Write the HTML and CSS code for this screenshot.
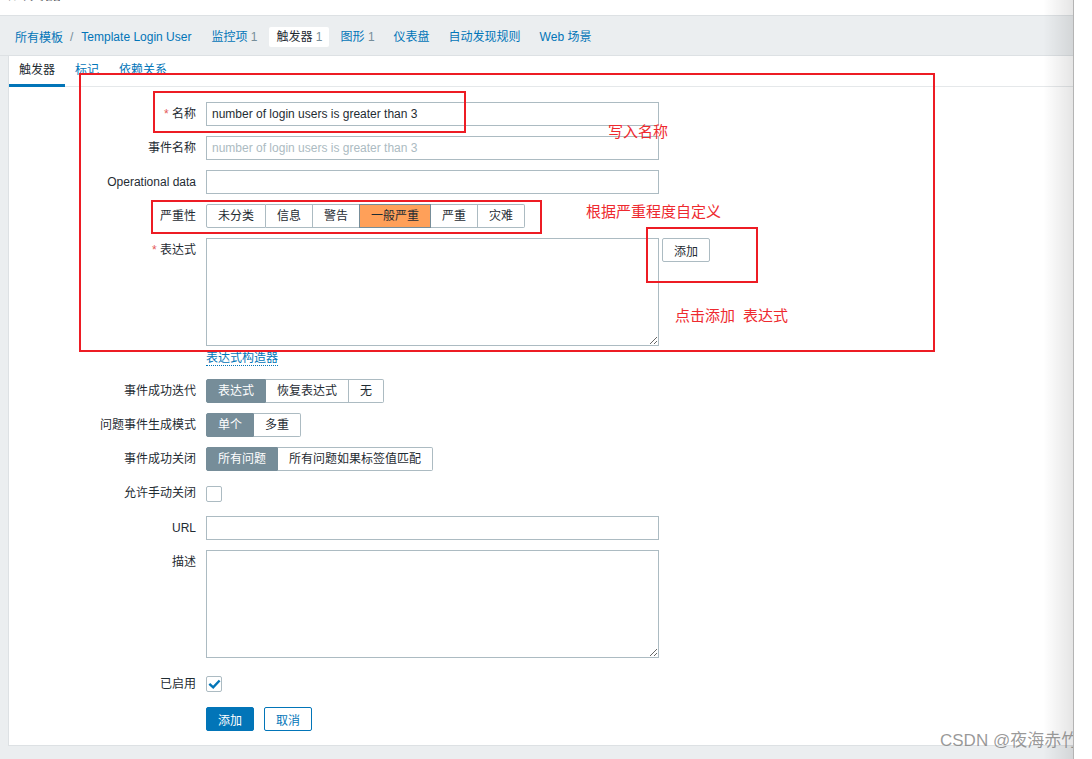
FILE: index.html
```html
<!DOCTYPE html>
<html lang="zh">
<head>
<meta charset="utf-8">
<title>触发器</title>
<link rel="stylesheet" href="styles.css">
</head>
<body>
<div class="app">
  <header class="titlebar"><h1 class="title">触发器</h1></header>
  <nav class="navbar">
    <a class="crumb">所有模板</a><span class="sep">/</span><a class="crumb">Template Login User</a>
    <ul class="navlist">
      <li class="navitem"><a>监控项</a> <span class="count">1</span></li>
      <li class="navitem active"><span>触发器</span> <span class="count">1</span></li>
      <li class="navitem"><a>图形</a> <span class="count">1</span></li>
      <li class="navitem"><a>仪表盘</a></li>
      <li class="navitem"><a>自动发现规则</a></li>
      <li class="navitem"><a>Web 场景</a></li>
    </ul>
  </nav>
  <main class="content">
    <ul class="tabs">
      <li class="tab active">触发器</li>
      <li class="tab">标记</li>
      <li class="tab">依赖关系</li>
    </ul>
    <form class="form">
      <div class="row">
        <label class="label"><span class="req">*</span> 名称</label>
        <div class="field"><input class="input" type="text" value="number of login users is greater than 3"></div>
      </div>
      <div class="row">
        <label class="label">事件名称</label>
        <div class="field"><input class="input" type="text" placeholder="number of login users is greater than 3"></div>
      </div>
      <div class="row">
        <label class="label">Operational data</label>
        <div class="field"><input class="input" type="text"></div>
      </div>
      <div class="row">
        <label class="label">严重性</label>
        <div class="field">
          <div class="seg">
            <span class="segbtn">未分类</span><span class="segbtn">信息</span><span class="segbtn">警告</span><span class="segbtn avg">一般严重</span><span class="segbtn">严重</span><span class="segbtn">灾难</span>
          </div>
        </div>
      </div>
      <div class="row row-expr">
        <label class="label"><span class="req">*</span> 表达式</label>
        <div class="field">
          <div class="expr-line">
            <textarea class="textarea"></textarea>
            <button type="button" class="btn-alt">添加</button>
          </div>
          <div class="builder"><a class="dotlink">表达式构造器</a></div>
        </div>
      </div>
      <div class="row">
        <label class="label">事件成功迭代</label>
        <div class="field">
          <div class="seg">
            <span class="segbtn on">表达式</span><span class="segbtn">恢复表达式</span><span class="segbtn">无</span>
          </div>
        </div>
      </div>
      <div class="row">
        <label class="label">问题事件生成模式</label>
        <div class="field">
          <div class="seg">
            <span class="segbtn on">单个</span><span class="segbtn">多重</span>
          </div>
        </div>
      </div>
      <div class="row">
        <label class="label">事件成功关闭</label>
        <div class="field">
          <div class="seg">
            <span class="segbtn on">所有问题</span><span class="segbtn">所有问题如果标签值匹配</span>
          </div>
        </div>
      </div>
      <div class="row row-check">
        <label class="label">允许手动关闭</label>
        <div class="field field-check"><span class="checkbox"></span></div>
      </div>
      <div class="row">
        <label class="label">URL</label>
        <div class="field"><input class="input" type="text"></div>
      </div>
      <div class="row">
        <label class="label">描述</label>
        <div class="field"><textarea class="textarea"></textarea></div>
      </div>
      <div class="row row-enabled">
        <label class="label">已启用</label>
        <div class="field field-check">
          <span class="checkbox checked"><svg width="13" height="13" viewBox="0 0 13 13"><path d="M2.2 6.6 L5.2 9.4 L10.8 3.4" fill="none" stroke="#0275b8" stroke-width="2.4" stroke-linecap="square"/></svg></span>
        </div>
      </div>
      <div class="row row-buttons">
        <span></span>
        <div class="field buttons">
          <button type="button" class="btn-main">添加</button>
          <button type="button" class="btn-cancel">取消</button>
        </div>
      </div>
    </form>
  </main>
  <div class="edge-shadow"></div>
  <div class="annot box-big"></div>
  <div class="annot box-name"></div>
  <div class="annot box-sev"></div>
  <div class="annot box-add"></div>
  <div class="note note-name">写入名称</div>
  <div class="note note-sev">根据严重程度自定义</div>
  <div class="note note-add">点击添加<span class="gap"></span>表达式</div>
  <div class="watermark">CSDN @夜海赤竹</div>
</div>
</body>
</html>
```
FILE: styles.css
```css
* { box-sizing: border-box; }
html, body { margin: 0; padding: 0; background: #ffffff; }
body {
  width: 1092px;
  height: 759px;
  overflow: hidden;
  font-family: "Liberation Sans", Arial, "Noto Sans CJK SC", sans-serif;
  font-size: 12px;
  color: #1f2c33;
}
.app {
  position: relative;
  width: 1074px;
  height: 759px;
  background: #ebeef0;
  border-right: 1px solid #b4b4b4;
  display: flex;
  flex-direction: column;
  overflow: hidden;
}
.titlebar {
  height: 16px;
  flex: none;
  background: #ffffff;
  border-bottom: 1px solid #dde1e4;
  overflow: hidden;
}
.title {
  margin: -19px 0 0 8px;
  font-size: 18px;
  line-height: 24px;
  font-weight: normal;
  color: #1f2c33;
}
.navbar {
  flex: none;
  height: 40px;
  display: flex;
  align-items: center;
  padding-left: 15px;
  padding-top: 2px;
  border-bottom: 1px solid #dde1e4;
  background: #ebeef0;
}
.crumb { color: #0275b8; text-decoration: none; }
.sep { color: #768d99; margin: 0 8px 0 7px; }
.navlist {
  display: flex;
  list-style: none;
  margin: 0 0 0 13px;
  padding: 0;
  gap: 5px;
}
.navitem {
  height: 20px;
  line-height: 20px;
  padding: 0 7px;
  border-radius: 2px;
  color: #0275b8;
  white-space: nowrap;
}
.navitem a { color: #0275b8; }
.navitem .count { color: #768d99; }
.navitem.active { background: #ffffff; color: #1f2c33; padding: 0 6px 0 7px; }
.navitem.active .count { color: #768d99; }
.content {
  flex: none;
  height: 690px;
  margin-left: 8px;
  background: #ffffff;
  border-left: 1px solid #dde1e4;
  border-bottom: 1px solid #dde1e4;
}
.tabs {
  display: flex;
  list-style: none;
  margin: 0;
  padding: 0;
  height: 31px;
  box-shadow: inset 0 -1px 0 #e5e8ea;
}
.tab {
  height: 31px;
  line-height: 28px;
  padding: 0 10px;
  color: #0275b8;
  border-bottom: 3px solid transparent;
}
.tab.active { color: #1f2c33; border-bottom-color: #0275b8; }
.form {
  padding-top: 15px;
  display: flex;
  flex-direction: column;
  gap: 10px;
}
.row {
  display: grid;
  grid-template-columns: 187px 1fr;
  column-gap: 10px;
  align-items: start;
}
.label {
  text-align: right;
  line-height: 24px;
  white-space: nowrap;
}
.req { color: #e45959; }
.field { min-height: 24px; }
.input {
  display: block;
  width: 453px;
  height: 24px;
  border: 1px solid #acbbc2;
  border-radius: 0;
  padding: 0 5px;
  font: inherit;
  color: #1f2c33;
  background: #ffffff;
  outline: none;
}
.input::placeholder { color: #acbbc2; }
.textarea {
  display: block;
  width: 453px;
  height: 108px;
  border: 1px solid #acbbc2;
  padding: 3px 5px;
  font: inherit;
  margin: 0;
  background: #ffffff;
  outline: none;
}
.seg { display: flex; }
.segbtn {
  height: 24px;
  line-height: 22px;
  padding: 0 11px;
  border: 1px solid #acbbc2;
  border-left: none;
  background: #ffffff;
  white-space: nowrap;
  color: #1f2c33;
}
.segbtn:first-child { border-left: 1px solid #acbbc2; border-radius: 2px 0 0 2px; }
.segbtn:last-child { border-radius: 0 2px 2px 0; }
.segbtn.on { background: #768d99; border-color: #768d99; color: #ffffff; }
.segbtn.avg { background: #ffa059; border: 1px solid #768d99; color: #1f2c33; margin-left: -1px; }
.expr-line { display: flex; align-items: flex-start; gap: 3px; }
.btn-alt {
  width: 48px;
  height: 24px;
  border: 1px solid #acbbc2;
  border-radius: 2px;
  background: #ffffff;
  font: inherit;
  color: #1f2c33;
  padding: 0;
}
.builder { height: 23px; padding-top: 5px; line-height: 15px; }
.dotlink {
  color: #0275b8;
  text-decoration: none;
  border-bottom: 1px dotted #0275b8;
}
.field-check { height: 25px; display: flex; align-items: center; }
.checkbox {
  width: 16px;
  height: 16px;
  border: 1px solid #acbbc2;
  border-radius: 2px;
  background: #ffffff;
  display: flex;
  align-items: center;
  justify-content: center;
}
.row-enabled { margin-top: 4px; }
.row-enabled .field-check { height: 24px; }
.row-buttons { margin-top: 1px; }
.buttons { display: flex; gap: 10px; }
.btn-main {
  width: 48px;
  height: 24px;
  border: 1px solid #0275b8;
  border-radius: 2px;
  background: #0275b8;
  color: #ffffff;
  font: inherit;
  padding: 0;
}
.btn-cancel {
  width: 48px;
  height: 24px;
  border: 1px solid #0275b8;
  border-radius: 2px;
  background: #ffffff;
  color: #0275b8;
  font: inherit;
  padding: 0;
}
.edge-shadow {
  position: absolute;
  top: 0;
  right: 0;
  width: 30px;
  height: 759px;
  background: linear-gradient(to right, rgba(0,0,0,0), rgba(0,0,0,0.10));
  pointer-events: none;
}
.annot {
  position: absolute;
  border: 2px solid #ed1c24;
  pointer-events: none;
}
.box-big { left: 79px; top: 73px; width: 856px; height: 279px; }
.box-name { left: 153px; top: 91px; width: 313px; height: 42px; }
.box-sev { left: 151px; top: 200px; width: 391px; height: 34px; }
.box-add { left: 646px; top: 227px; width: 112px; height: 56px; }
.note {
  position: absolute;
  color: #ee2a2f;
  font-family: "Noto Sans CJK SC", sans-serif;
  font-size: 15px;
  line-height: 18px;
  white-space: nowrap;
}
.note-name { left: 608px; top: 122px; }
.note-sev { left: 586px; top: 202px; }
.note-add { left: 675px; top: 306px; }
.note .gap { display: inline-block; width: 8px; }
.watermark {
  position: absolute;
  left: 940px;
  top: 730px;
  font-family: "Liberation Sans", "Noto Sans CJK SC", sans-serif;
  font-size: 17px;
  line-height: 22px;
  color: rgba(120,120,120,0.75);
  white-space: nowrap;
}
```
